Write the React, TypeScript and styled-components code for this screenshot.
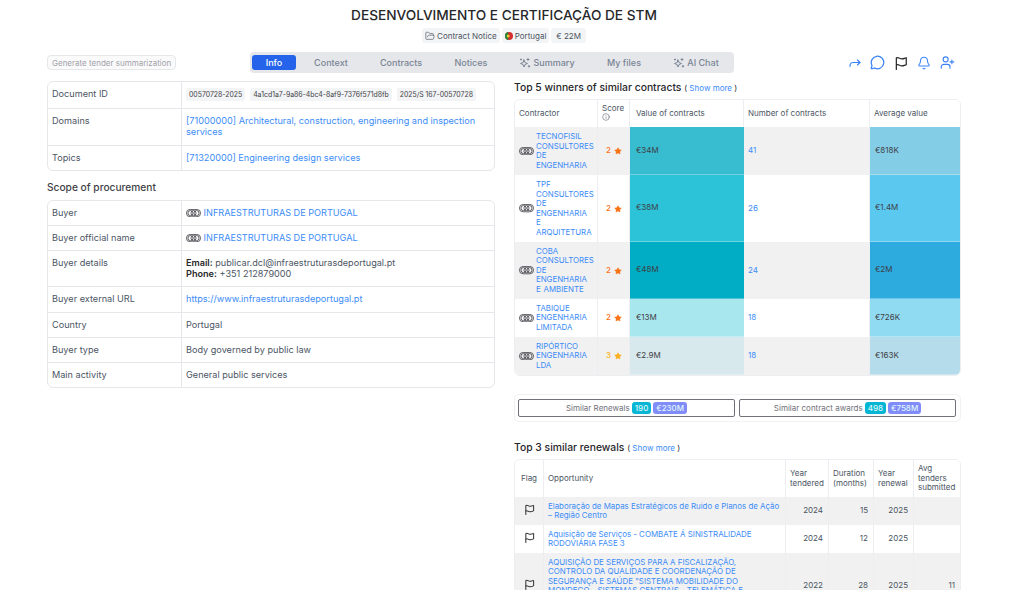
import { ReactNode } from 'react'
import { Bell, FolderOpen, Info, MessageCircle, Star, UserPlus } from 'lucide-react'
import styled, { createGlobalStyle } from 'styled-components'

const GlobalStyle = createGlobalStyle`
  html, body {
    margin: 0;
    padding: 0;
    background: #fff;
    overflow: hidden;
  }
  body {
    font-family: Inter, "Liberation Sans", sans-serif;
    color: #4b5563;
  }
  * {
    box-sizing: border-box;
  }
`

const CompanyIcon = () => (
  <RingIcon width="15" height="8.25" viewBox="0 0 20 11" fill="none" stroke="#3f3f46" strokeWidth="1.1">
    <rect x="0.6" y="0.6" width="18.8" height="9.8" rx="4.9" />
    <circle cx="6" cy="5.5" r="3.4" />
    <circle cx="10" cy="5.5" r="3.4" />
    <circle cx="14" cy="5.5" r="3.4" />
  </RingIcon>
)

const SparkIcon = () => (
  <svg width="12" height="12" viewBox="0 0 24 24" fill="none" stroke="#7b8594" strokeWidth="2" strokeLinecap="round" strokeLinejoin="round">
    <path d="M10 6l2 5 5 2-5 2-2 5-2-5-5-2 5-2z" />
    <path d="M18 3v4M16 5h4" />
    <path d="M20 17v3M18.5 18.5h3" />
    <path d="M4 4v2M3 5h2" />
  </svg>
)

const ForwardIcon = () => (
  <svg width="12" height="12" viewBox="0 0 24 24" fill="none" stroke="#3b82f6" strokeWidth="2.2" strokeLinecap="round" strokeLinejoin="round">
    <path d="M2 19v-2a6 6 0 0 1 6-6h14" />
    <path d="M17 6l5 5-5 5" />
  </svg>
)

const FlagIcon = ({ size }: { size: number }) => (
  <svg width={size} height={size} viewBox="0 0 24 24" fill="none" stroke="#27272a" strokeWidth="2.1" strokeLinecap="round" strokeLinejoin="round">
    <path d="M4 23V3c4-1 6 2 9 2 3 0 5-1 8-2v12c-3 1-5 2-8 2s-5-3-9-2" />
  </svg>
)

const PortugalFlag = () => (
  <svg width="8" height="8" viewBox="0 0 8 8">
    <circle cx="4" cy="4" r="4" fill="#d32f2f" />
    <path d="M3.2 0.08A4 4 0 0 0 3.2 7.92z" fill="#1f8a3b" />
    <circle cx="3.2" cy="4" r="1.5" fill="#f2c230" />
  </svg>
)

const winners = [
  { name: 'TECNOFISIL CONSULTORES DE ENGENHARIA', score: 2, value: '€34M', valueBg: '#38bcd0', count: 41, avg: '€818K', avgBg: '#83cee6', height: 48 },
  { name: 'TPF CONSULTORES DE ENGENHARIA E ARQUITETURA', score: 2, value: '€38M', valueBg: '#2cc3d8', count: 26, avg: '€1.4M', avgBg: '#5bc8f0', height: 67 },
  { name: 'COBA CONSULTORES DE ENGENHARIA E AMBIENTE', score: 2, value: '€48M', valueBg: '#00adc4', count: 24, avg: '€2M', avgBg: '#2dabdf', height: 57 },
  { name: 'TABIQUE ENGENHARIA LIMITADA', score: 2, value: '€13M', valueBg: '#a9e7ef', count: 18, avg: '€726K', avgBg: '#90dbf2', height: 38 },
  { name: 'RIPÓRTICO ENGENHARIA LDA', score: 3, value: '€2.9M', valueBg: '#d7e9ed', count: 18, avg: '€163K', avgBg: '#b5dcea', height: 38 },
]

const renewals = [
  { title: 'Elaboração de Mapas Estratégicos de Ruido e Planos de Ação – Região Centro', tendered: 2024, months: 15, renewal: 2025, avg: '', height: 28 },
  { title: 'Aquisição de Serviços - COMBATE Á SINISTRALIDADE RODOVIÁRIA FASE 3', tendered: 2024, months: 12, renewal: 2025, avg: '', height: 28 },
  {
    title: 'AQUISIÇÃO DE SERVIÇOS PARA A FISCALIZAÇÃO, CONTROLO DA QUALIDADE E COORDENAÇÃO DE SEGURANÇA E SAÚDE "SISTEMA MOBILIDADE DO MONDEGO\u00a0-\u00a0SISTEMAS CENTRAIS - TELEMÁTICA E BILHÉTICA SEM CONTACTO DO SISTEMA DE MOBILIDADE DO MONDEGO E OBRAS ASSOCIADAS NA REGIÃO CENTRO"',
    tendered: 2022,
    months: 28,
    renewal: 2025,
    avg: '11',
    height: 66,
  },
]

const tabs = ['Info', 'Context', 'Contracts', 'Notices', 'Summary', 'My files', 'AI Chat']

const detailHeights: Record<string, number> = {
  'Buyer details': 36,
  'Buyer external URL': 26,
  'Main activity': 24,
}

const App = () => {
  const detailRows: { label: string; value: ReactNode }[] = [
    { label: 'Buyer', value: <><CompanyIcon /> <Link>INFRAESTRUTURAS DE PORTUGAL</Link></> },
    { label: 'Buyer official name', value: <><CompanyIcon /> <Link>INFRAESTRUTURAS DE PORTUGAL</Link></> },
    {
      label: 'Buyer details',
      value: (
        <>
          <b>Email:</b> publicar.dcl@infraestruturasdeportugal.pt
          <br />
          <b>Phone:</b> +351 212879000
        </>
      ),
    },
    { label: 'Buyer external URL', value: <Link>https://www.infraestruturasdeportugal.pt</Link> },
    { label: 'Country', value: 'Portugal' },
    { label: 'Buyer type', value: 'Body governed by public law' },
    { label: 'Main activity', value: 'General public services' },
  ]

  return (
    <Page>
      <GlobalStyle />
      <Header>
        <Title>DESENVOLVIMENTO E CERTIFICAÇÃO DE STM</Title>
        <ChipRow>
          <Chip><FolderOpen size={10} strokeWidth={1.6} /> Contract Notice</Chip>
          <Chip><PortugalFlag /> Portugal</Chip>
          <Chip $wide>€ 22M</Chip>
        </ChipRow>
      </Header>

      <Toolbar>
        <SummarizeButton>Generate tender summarization</SummarizeButton>
        <TabBar>
          {tabs.map((tab) => (
            <Tab key={tab} $active={tab === 'Info'}>
              {(tab === 'Summary' || tab === 'AI Chat') && <SparkIcon />}
              {tab}
            </Tab>
          ))}
        </TabBar>
        <Actions>
          <ForwardIcon />
          <MessageCircle size={15} color="#3b82f6" strokeWidth={2} />
          <FlagIcon size={14} />
          <Bell size={14} color="#3b82f6" strokeWidth={1.8} />
          <UserPlus size={15} color="#3b82f6" strokeWidth={1.8} />
        </Actions>
      </Toolbar>

      <Columns>
        <Column>
          <InfoCard>
            <tbody>
              <InfoRow $height={27}>
                <LabelCell>Document ID</LabelCell>
                <ValueCell>
                  <IdRow>
                    <IdChip>00570728-2025</IdChip>
                    <IdChip>4a1cd1a7-9a86-4bc4-8af9-7376f571d8fb</IdChip>
                    <IdChip>2025/S 167-00570728</IdChip>
                  </IdRow>
                </ValueCell>
              </InfoRow>
              <InfoRow $height={37}>
                <LabelCell>Domains</LabelCell>
                <ValueCell><Link>[71000000] Architectural, construction, engineering and inspection services</Link></ValueCell>
              </InfoRow>
              <InfoRow $height={24}>
                <LabelCell>Topics</LabelCell>
                <ValueCell><Link>[71320000] Engineering design services</Link></ValueCell>
              </InfoRow>
            </tbody>
          </InfoCard>

          <ScopeHeading>Scope of procurement</ScopeHeading>
          <InfoCard>
            <tbody>
              {detailRows.map((row) => (
                <InfoRow key={row.label} $height={detailHeights[row.label] ?? 25}>
                  <LabelCell>{row.label}</LabelCell>
                  <ValueCell>{row.value}</ValueCell>
                </InfoRow>
              ))}
            </tbody>
          </InfoCard>
        </Column>

        <Column>
          <SectionHeading>
            Top 5 winners of similar contracts <ShowMore>( <Link>Show more</Link> )</ShowMore>
          </SectionHeading>
          <DataCard>
            <colgroup>
              <col style={{ width: 83 }} />
              <col style={{ width: 32 }} />
              <col style={{ width: 114 }} />
              <col style={{ width: 126 }} />
              <col style={{ width: 90 }} />
            </colgroup>
            <thead>
              <tr>
                <HeadCell $height={27}>Contractor</HeadCell>
                <HeadCell>Score<br /><Info size={8} strokeWidth={1.6} /></HeadCell>
                <HeadCell $pad={6}>Value of contracts</HeadCell>
                <HeadCell>Number of contracts</HeadCell>
                <HeadCell>Average value</HeadCell>
              </tr>
            </thead>
            <tbody>
              {winners.map((w) => (
                <StripedRow key={w.name}>
                  <BodyCell $height={w.height}>
                    <Contractor>
                      <CompanyIcon />
                      <ContractorName>{w.name}</ContractorName>
                    </Contractor>
                  </BodyCell>
                  <BodyCell>
                    <Score $score={w.score}>
                      {w.score} <Star size={8} fill="currentColor" strokeWidth={1} />
                    </Score>
                  </BodyCell>
                  <HeatCell $bg={w.valueBg} $pad={6}>{w.value}</HeatCell>
                  <BodyCell><Link>{w.count}</Link></BodyCell>
                  <HeatCell $bg={w.avgBg}>{w.avg}</HeatCell>
                </StripedRow>
              ))}
            </tbody>
          </DataCard>

          <SimilarBar>
            <SimilarButton>
              Similar Renewals <CountBadge>190</CountBadge> <ValueBadge>€230M</ValueBadge>
            </SimilarButton>
            <SimilarButton>
              Similar contract awards <CountBadge>498</CountBadge> <ValueBadge>€758M</ValueBadge>
            </SimilarButton>
          </SimilarBar>

          <SectionHeading>
            Top 3 similar renewals <ShowMore>( <Link>Show more</Link> )</ShowMore>
          </SectionHeading>
          <DataCard>
            <colgroup>
              <col style={{ width: 29 }} />
              <col style={{ width: 242 }} />
              <col style={{ width: 43 }} />
              <col style={{ width: 45 }} />
              <col style={{ width: 40 }} />
              <col style={{ width: 46 }} />
            </colgroup>
            <thead>
              <tr>
                <HeadCell $height={37} $center>Flag</HeadCell>
                <HeadCell>Opportunity</HeadCell>
                <HeadCell>Year tendered</HeadCell>
                <HeadCell>Duration (months)</HeadCell>
                <HeadCell>Year renewal</HeadCell>
                <HeadCell>Avg tenders submitted</HeadCell>
              </tr>
            </thead>
            <tbody>
              {renewals.map((r) => (
                <StripedRow key={r.title}>
                  <BodyCell $center $height={r.height}><FlagIcon size={11} /></BodyCell>
                  <BodyCell><OpportunityLink>{r.title}</OpportunityLink></BodyCell>
                  <NumberCell>{r.tendered}</NumberCell>
                  <NumberCell>{r.months}</NumberCell>
                  <NumberCell>{r.renewal}</NumberCell>
                  <NumberCell>{r.avg}</NumberCell>
                </StripedRow>
              ))}
            </tbody>
          </DataCard>
        </Column>
      </Columns>
    </Page>
  )
}
export default App

const Page = styled.div`
  width: 1024px;
  height: 590px;
  overflow: hidden;
  padding: 0 63px 0 47px;
`

const Header = styled.header`
  display: flex;
  flex-direction: column;
  align-items: center;
  padding-top: 6px;
`

const Title = styled.h1`
  margin: 0;
  font-size: 13.65px;
  line-height: 18px;
  font-weight: 500;
  color: #27272a;
`

const ChipRow = styled.div`
  display: flex;
  gap: 2px;
  margin-top: 4px;
`

const Chip = styled.span<{ $wide?: boolean }>`
  display: inline-flex;
  align-items: center;
  gap: 2px;
  height: 15px;
  padding: 0 ${(p) => (p.$wide ? '5px' : '3px')};
  border-radius: 3px;
  background: #f3f4f6;
  font-size: 8px;
  color: #4b5563;
`

const Toolbar = styled.div`
  display: grid;
  grid-template-columns: 203px 484px 1fr;
  align-items: center;
  margin-top: 9px;
`

const SummarizeButton = styled.span`
  justify-self: start;
  display: inline-flex;
  align-items: center;
  height: 15px;
  padding: 0 4px;
  border: 1px solid #e5e7eb;
  border-radius: 4px;
  background: #fafafa;
  font-size: 8px;
  color: #a1a1aa;
`

const TabBar = styled.nav`
  display: grid;
  grid-template-columns: 44px 70px 70px 70px 82px 72px 1fr;
  align-items: center;
  height: 21px;
  padding: 0 2px;
  border-radius: 4px;
  background: #e5e7eb;
`

const Tab = styled.span<{ $active?: boolean }>`
  display: flex;
  align-items: center;
  justify-content: center;
  gap: 2px;
  height: 15px;
  border-radius: 3px;
  font-size: 9px;
  font-weight: 500;
  background: ${(p) => (p.$active ? '#2563eb' : 'transparent')};
  color: ${(p) => (p.$active ? '#fff' : '#7b8594')};
`

const Actions = styled.div`
  display: flex;
  align-items: center;
  gap: 9px;
  padding-left: 115px;
`

const Columns = styled.main`
  display: grid;
  grid-template-columns: 448px 447px;
  gap: 19px;
  align-items: start;
  margin-top: 8px;
`

const Column = styled.section`
  display: flex;
  flex-direction: column;
`

const InfoCard = styled.table`
  width: 100%;
  border-collapse: separate;
  border-spacing: 0;
  border: 1px solid #e5e7eb;
  border-radius: 6px;
  font-size: 9.15px;
`

const InfoRow = styled.tr<{ $height: number }>`
  height: ${(p) => p.$height}px;

  &:not(:last-child) td {
    border-bottom: 1px solid #e5e7eb;
  }
`

const LabelCell = styled.td`
  width: 134px;
  padding: 6px 4px 0;
  border-right: 1px solid #e5e7eb;
  line-height: 11px;
  vertical-align: top;
`

const ValueCell = styled.td`
  padding: 6px 4px 0;
  line-height: 11px;
  vertical-align: top;

  b {
    font-weight: 600;
    color: #27272a;
  }
`

const IdRow = styled.div`
  display: flex;
  gap: 5px;
`

const IdChip = styled.span`
  padding: 2px 3px;
  border-radius: 2px;
  background: #f3f4f6;
  font-size: 6.9px;
  line-height: 9px;
  color: #3f3f46;
`

const Link = styled.a`
  color: #3b8cf7;
`

const ContractorName = styled(Link)`
  font-size: 7.85px;
  word-spacing: 0.6px;
`

const OpportunityLink = styled(Link)`
  font-size: 7.9px;
`

const RingIcon = styled.svg`
  flex: none;
  vertical-align: -1px;
`

const ScopeHeading = styled.h2`
  margin: 10px 0 6px;
  font-size: 10.2px;
  line-height: 13px;
  font-weight: 500;
  color: #3f3f46;
`

const SectionHeading = styled.h2`
  margin: 0 0 4px;
  font-size: 10.35px;
  line-height: 13px;
  font-weight: 500;
  color: #27272a;
`

const ShowMore = styled.span`
  font-size: 8px;
  font-weight: 400;
`

const DataCard = styled.table`
  width: 100%;
  table-layout: fixed;
  border-collapse: separate;
  border-spacing: 0;
  border: 1px solid #eceef1;
  border-radius: 6px;
  overflow: hidden;
  font-size: 8px;
  line-height: 9.5px;
`

const HeadCell = styled.th<{ $height?: number; $center?: boolean; $pad?: number }>`
  height: ${(p) => (p.$height ? `${p.$height}px` : 'auto')};
  padding: 0 4px 0 ${(p) => p.$pad ?? 4}px;
  border-right: 1px solid #eceef1;
  background: #fff;
  font-weight: 400;
  text-align: ${(p) => (p.$center ? 'center' : 'left')};
  color: #4b5563;

  &:last-child {
    border-right: 0;
  }
`

const StripedRow = styled.tr`
  &:nth-child(odd) td {
    background-color: #f1f1f1;
  }
`

const BodyCell = styled.td<{ $height?: number; $center?: boolean }>`
  height: ${(p) => (p.$height ? `${p.$height}px` : 'auto')};
  padding: 0 3px 0 4px;
  border-right: 1px solid #eceef1;
  text-align: ${(p) => (p.$center ? 'center' : 'left')};
  vertical-align: middle;

  &:last-child {
    border-right: 0;
  }
`

const HeatCell = styled.td<{ $bg: string; $pad?: number }>`
  padding: 0 5px 0 ${(p) => p.$pad ?? 5}px;
  border-bottom: 1px solid rgba(255, 255, 255, 0.3);
  color: #3f3f46;
  tr:nth-child(n) > & {
    background-color: ${(p) => p.$bg};
  }
`

const NumberCell = styled.td`
  padding: 0 5px;
  border-right: 1px solid #eceef1;
  text-align: right;

  &:last-child {
    border-right: 0;
  }
`

const Contractor = styled.div`
  display: flex;
  align-items: center;
  gap: 2px;
`

const Score = styled.span<{ $score: number }>`
  display: flex;
  align-items: center;
  justify-content: center;
  gap: 3px;
  font-weight: 500;
  color: ${(p) => (p.$score === 3 ? '#fbb024' : '#f97316')};
`

const SimilarBar = styled.div`
  display: grid;
  grid-template-columns: 217px 217px;
  gap: 4px;
  margin: 18px 0 19px;
  padding: 4px 3px;
  border: 1px solid #f1f2f4;
  border-radius: 5px;
`

const SimilarButton = styled.div`
  display: flex;
  align-items: center;
  justify-content: center;
  gap: 2px;
  height: 18px;
  border: 1px solid #71717a;
  border-radius: 2px;
  font-size: 8px;
  color: #71717a;
`

const CountBadge = styled.span`
  padding: 1px 3px;
  border-radius: 3px;
  background: #06b6d4;
  color: #dff7fb;
  font-weight: 500;
`

const ValueBadge = styled(CountBadge)`
  background: #818cf8;
`
